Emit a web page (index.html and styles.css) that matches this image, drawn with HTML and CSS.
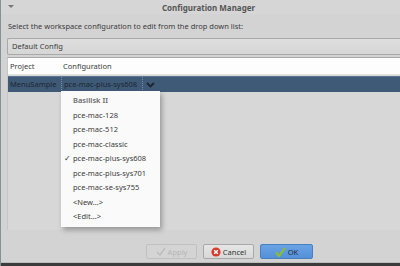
FILE: index.html
```html
<!DOCTYPE html>
<html lang="en">
<head>
    <meta charset="UTF-8">
    <title>Configuration Manager</title>
    <link rel="stylesheet" href="styles.css">
</head>
<body>
    <div class="window">
        <div class="titlebar">
            <span class="menu-arrow"></span>
            <span class="title">Configuration Manager</span>
        </div>
        <div class="content">
            <div class="label">Select the workspace configuration to edit from the drop down list:</div>
            <div class="combo">Default Config</div>
            <div class="table">
                <div class="table-head">
                    <div class="col-project">Project</div>
                    <div class="col-config">Configuration</div>
                </div>
                <div class="table-row selected">
                    <div class="col-project">MenuSample</div>
                    <div class="col-config cell-editor">
                        <span>pce-mac-plus-sys608</span>
                        <span class="chevron">
                            <svg width="9" height="6" viewBox="0 0 9 6"><path d="M1 1 L4.5 4.5 L8 1" fill="none" stroke="#1c2530" stroke-width="1.8"/></svg>
                        </span>
                    </div>
                </div>
                <div class="table-empty"></div>
            </div>
            <div class="buttons">
                <button class="btn disabled">
                    <svg width="10" height="9" viewBox="0 0 10 9"><path d="M1 5 L4 8 L9 1" fill="none" stroke="#bcbcbc" stroke-width="1.4"/></svg>
                    Apply
                </button>
                <button class="btn">
                    <svg width="10" height="10" viewBox="0 0 10 10"><circle cx="5" cy="5" r="4.6" fill="#d83a2c"/><path d="M3.2 3.2 L6.8 6.8 M6.8 3.2 L3.2 6.8" stroke="#fff" stroke-width="1.5"/></svg>
                    Cancel
                </button>
                <button class="btn primary">
                    <svg width="11" height="10" viewBox="0 0 11 10"><path d="M1 5.5 L4 9 L10 1" fill="none" stroke="#8fc21f" stroke-width="2"/></svg>
                    OK
                </button>
            </div>
        </div>
        <div class="bottom-edge"></div>
    </div>

    <div class="popup">
        <div class="item first">Basilisk II</div>
        <div class="item">pce-mac-128</div>
        <div class="item">pce-mac-512</div>
        <div class="item">pce-mac-classic</div>
        <div class="item checked">pce-mac-plus-sys608</div>
        <div class="item">pce-mac-plus-sys701</div>
        <div class="item">pce-mac-se-sys755</div>
        <div class="item">&lt;New...&gt;</div>
        <div class="item">&lt;Edit...&gt;</div>
    </div>
</body>
</html>
```

FILE: styles.css
```css
html, body {
    margin: 0;
    padding: 0;
    width: 400px;
    height: 266px;
    overflow: hidden;
    background-color: #d3d3d3;
}
body {
    font-family: 'Noto Sans', 'Open Sans', sans-serif;
    font-size: 7.5px;
    color: #3a3a3a;
    position: relative;
}
.window {
    width: 400px;
    height: 266px;
    display: flex;
    flex-direction: column;
    border-left: 1px solid #8a8f96;
    box-sizing: border-box;
}
.titlebar {
    height: 14px;
    display: flex;
    align-items: center;
    position: relative;
    background-color: #d6d6d6;
}
.menu-arrow {
    position: absolute;
    left: 7px;
    top: 5px;
    border-left: 3px solid transparent;
    border-right: 3px solid transparent;
    border-top: 3px solid #777;
}
.title {
    flex: 1;
    text-align: center;
    font-weight: bold;
    font-size: 8px;
    color: #555;
    padding-left: 44px;
    margin-left: -28px;
    white-space: nowrap;
}
.content {
    flex: 1;
    display: flex;
    flex-direction: column;
    padding: 4px 0 0 6px;
    white-space: nowrap;
}
.label {
    height: 16px;
    line-height: 16px;
    padding-left: 1px;
}
.combo {
    margin-top: 4px;
    height: 15px;
    line-height: 15px;
    padding-left: 4px;
    border: 1px solid #a9a9a9;
    border-right: none;
    border-radius: 2px 0 0 2px;
    background: linear-gradient(#dedede, #d6d6d6);
}
.table {
    margin-top: 2px;
    height: 172px;
    display: flex;
    flex-direction: column;
    border-top: 1px solid #a8a8a8;
    border-left: 1px solid #c6c6c6;
    background-color: #d7d7d7;
}
.table-head {
    display: flex;
    height: 16px;
    line-height: 16px;
    background-color: #fdfdfd;
    border-bottom: 1px solid #e4e4e4;
}
.col-project {
    width: 53px;
    padding-left: 2px;
    box-sizing: border-box;
    overflow: hidden;
}
.col-config {
    flex: 1;
    padding-left: 2px;
}
.table-row {
    display: flex;
    height: 15px;
    line-height: 15px;
    margin-top: 1px;
}
.selected {
    background-color: #3f5a77;
    border-top: 1px solid #5d7590;
    color: #1b2633;
}
.cell-editor {
    flex: none;
    width: 96px;
    display: flex;
    align-items: center;
    border-left: 1px dotted #7a8ea5;
    padding-left: 2px;
    box-sizing: border-box;
}
.chevron {
    margin-left: 5px;
    height: 15px;
    display: flex;
    align-items: center;
    padding-left: 3px;
    border-left: 1px dotted #7a8ea5;
}
.table-empty {
    flex: 1;
}
.buttons {
    display: flex;
    gap: 6px;
    margin-top: 14px;
    margin-left: 139px;
}
.btn {
    width: 51px;
    height: 15px;
    padding: 0;
    display: flex;
    align-items: center;
    justify-content: center;
    gap: 2px;
    font-family: 'Noto Sans', 'Open Sans', sans-serif;
    font-size: 7.5px;
    color: #333;
    background: linear-gradient(#e6e6e6, #d8d8d8);
    border: 1px solid #a8a8a8;
    border-radius: 2px;
}
.btn.disabled {
    color: #b4b4b4;
    background: #d4d4d4;
    border-color: #c0c0c0;
}
.btn.primary {
    width: 53px;
    background: linear-gradient(#6aa3e4, #5490d8);
    border-color: #4a7fbf;
    color: #1e2a38;
}
.bottom-edge {
    height: 3px;
    border-top: 1px solid #bcbcbc;
    background-color: #3b3b3b;
}
.popup {
    position: absolute;
    left: 61px;
    top: 91px;
    width: 99px;
    height: 136px;
    box-sizing: border-box;
    padding-top: 2px;
    background-color: #fafafa;
    box-shadow: 2px 3px 5px rgba(0, 0, 0, 0.3);
    white-space: nowrap;
}
.item {
    height: 14.5px;
    line-height: 14.5px;
    padding-left: 12px;
    position: relative;
    color: #3a3a3a;
}
.item.first {
    font-weight: 600;
    color: #6a6a6a;
}
.checked::before {
    content: "\2713";
    position: absolute;
    left: 3px;
    font-size: 8px;
    color: #333;
}
```
